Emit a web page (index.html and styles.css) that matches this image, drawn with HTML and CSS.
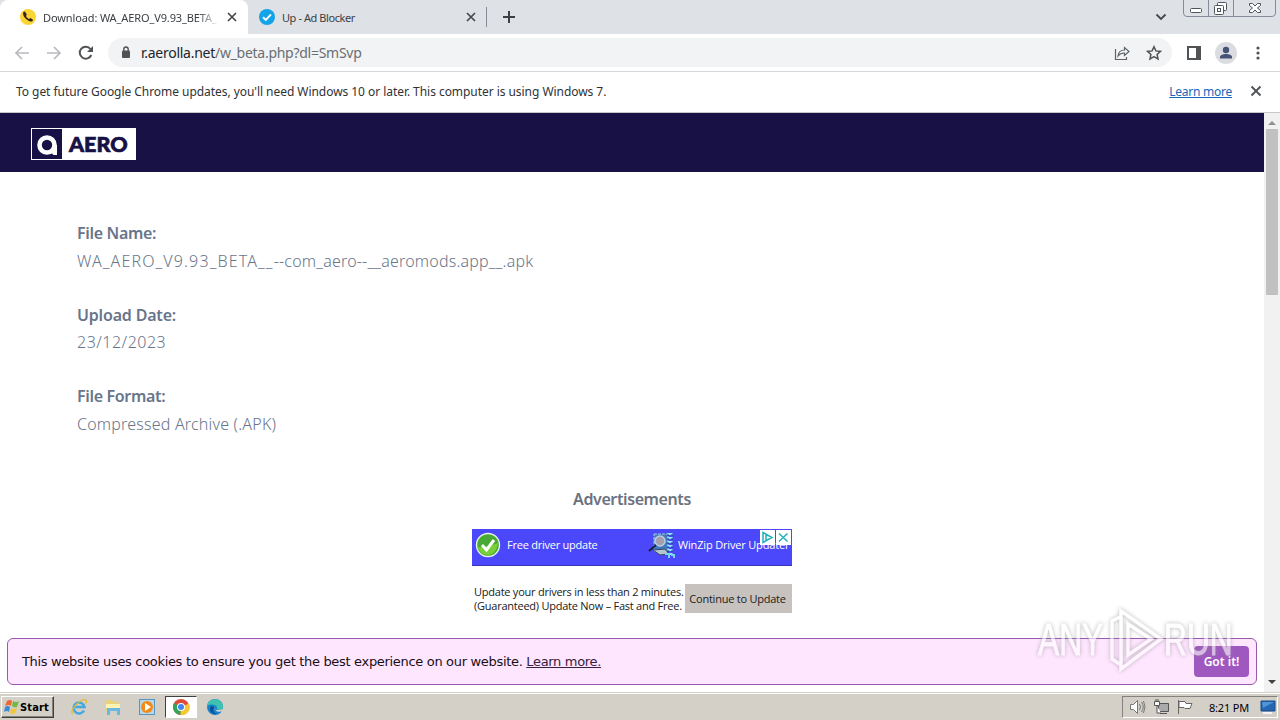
FILE: index.html
```
<!DOCTYPE html>
<html lang="en">
<head>
    <meta charset="UTF-8">
    <meta name="viewport" content="width=device-width, initial-scale=1.0">
    <title>Download: WA_AERO_V9.93_BETA</title>
    <link rel="stylesheet" href="styles.css">
</head>
<body>

    <!-- Tab strip -->
    <div class="tabs">
        <div class="tab active">
            <svg class="favicon" width="16" height="16" viewBox="0 0 16 16"><circle cx="8" cy="8" r="8" fill="#fcd535"/><path d="M3.500 3c-1 1-.4 4 1.800 6.200s5.300 4.300 7.200 2.800l.6-1-2.500-2-1.700.9c-1.200-.5-2.300-1.700-2.900-3l.8-1.500L5 2.500z" fill="#33271d"/></svg>
            <span class="tab-title fade">Download: WA_AERO_V9.93_BETA_</span>
            <svg class="tab-close" width="10" height="10" viewBox="0 0 10 10"><path d="M1 1l8 8M9 1L1 9" stroke="#45484c" stroke-width="1.700"/></svg>
        </div>
        <div class="tab">
            <svg class="favicon" width="16" height="16" viewBox="0 0 16 16"><circle cx="8" cy="8" r="8" fill="#13a3e8"/><path d="M4 8.200l2.800 2.600L12 5.300" fill="none" stroke="#fff" stroke-width="1.900"/></svg>
            <span class="tab-title second">Up - Ad Blocker</span>
            <svg class="tab-close" width="10" height="10" viewBox="0 0 10 10"><path d="M1 1l8 8M9 1L1 9" stroke="#45484c" stroke-width="1.700"/></svg>
        </div>
        <span class="divider"></span>
        <svg class="new-tab" width="12" height="12" viewBox="0 0 12 12"><path d="M6 0v12M0 6h12" stroke="#3c4043" stroke-width="2"/></svg>
        <svg class="tab-search" width="12" height="8" viewBox="0 0 12 8"><path d="M1.500 1.500L6 6l4.500-4.500" fill="none" stroke="#45484c" stroke-width="1.800"/></svg>
        <svg class="window-buttons" width="94" height="18" viewBox="0 0 94 18">
            <path d="M.5 0v13q0 3.500 3.500 3.500h85q3.500 0 3.500-3.500V0M25.500 0v16M50.500 0v16" fill="none" stroke="#858b98"/>
            <g fill="#fff" stroke="#50545d"><rect x="7.500" y="8.500" width="11" height="4" rx="1"/><rect x="34.500" y="2.500" width="9" height="8" rx="1"/><rect x="31.500" y="5.500" width="9" height="9" rx="1"/><rect x="34.500" y="8.500" width="3" height="3"/></g>
            <path d="M66.500 3.500h3l2.500 2.500 2.500-2.500h3v2l-3 2.500 3 2.500v2h-3L72 10l-2.500 2.500h-3v-2l3-2.500-3-2.500z" fill="#fff" stroke="#50545d"/>
        </svg>
    </div>

    <!-- Toolbar -->
    <div class="toolbar">
        <svg class="nav-icon" width="16" height="16" viewBox="0 0 16 16"><path d="M15 8H2M8 2L2 8l6 6" fill="none" stroke="#b8babd" stroke-width="1.700"/></svg>
        <svg class="nav-icon" width="16" height="16" viewBox="0 0 16 16"><path d="M1 8h13M8 2l6 6-6 6" fill="none" stroke="#b8babd" stroke-width="1.700"/></svg>
        <svg class="nav-icon" width="16" height="16" viewBox="0 0 16 16"><path d="M13.300 10A6 6 0 1 1 12.500 4" fill="none" stroke="#505356" stroke-width="2"/><path d="M15 1v6H9z" fill="#505356"/></svg>
        <div class="omnibox">
            <svg width="10" height="13" viewBox="0 0 10 13"><rect x="1" y="4.500" width="8" height="7.500" rx="1" fill="#505356"/><path d="M2.800 5V3.200a2.200 2.200 0 0 1 4.400 0V5" fill="none" stroke="#505356" stroke-width="1.400"/></svg>
            <span class="url"><span class="host">r.aerolla.net</span>/w_beta.php?dl=SmSvp</span>
            <svg class="share" width="16" height="16" viewBox="0 0 16 16"><path d="M1.500 4v10.500h11V12M4 11c.5-4 3-6 6.500-6V2.500L15 6.500l-4.500 4V8C7.500 8 5.500 9 4 11z" fill="none" stroke="#5f6368" stroke-width="1.200"/></svg>
            <svg width="16" height="16" viewBox="0 0 16 16"><path d="M8 1.700l1.900 4.200 4.600.5-3.400 3.100.9 4.600-4-2.400-4 2.400.9-4.600L1.500 6.400l4.600-.5z" fill="none" stroke="#505356" stroke-width="1.500"/></svg>
        </div>
        <svg class="panel-icon" width="14" height="14" viewBox="0 0 14 14"><rect x="1" y="1" width="12" height="12" fill="none" stroke="#505356" stroke-width="2"/><path d="M9 1h4v12H9z" fill="#505356"/></svg>
        <svg class="avatar" width="22" height="22" viewBox="0 0 22 22"><circle cx="11" cy="11" r="11" fill="#dadce0"/><circle cx="11" cy="8" r="3.200" fill="#465377"/><path d="M5 16.500v-1.500c0-4 12-4 12 0v1.500z" fill="#465377"/></svg>
        <svg class="menu" width="4" height="14" viewBox="0 0 4 14"><g fill="#505356"><circle cx="2" cy="2" r="1.600"/><circle cx="2" cy="7" r="1.600"/><circle cx="2" cy="12" r="1.600"/></g></svg>
    </div>

    <div class="infobar">
        <span class="infobar-text">To get future Google Chrome updates, you'll need Windows 10 or later. This computer is using Windows 7.</span>
        <a class="infobar-link">Learn more</a>
        <svg width="12" height="12" viewBox="0 0 12 12"><path d="M1.500 1.500l9 9M10.500 1.500l-9 9" stroke="#505356" stroke-width="1.900"/></svg>
    </div>

    <div class="viewport">
        <div class="page">
            <header class="site-header">
                <div class="logo">
                    <svg class="logo-mark" width="30" height="30" viewBox="0 0 30 30"><circle cx="15" cy="16" r="7.500" fill="none" stroke="#fff" stroke-width="4.600"/><path d="M20.500 16h4.500v10h-3.500l-2-2z" fill="#fff"/></svg>
                    <span class="logo-name">AERO</span>
                </div>
            </header>

            <main class="content">
                <dl class="details">
                    <dt>File Name:</dt>
                    <dd class="file"><span class="file-version">WA_AERO_V9.93_BETA__</span>--com_aero--__aeromods.app__.apk</dd>
                    <dt class="upload">Upload Date:</dt>
                    <dd class="date">23/12/2023</dd>
                    <dt>File Format:</dt>
                    <dd class="archive">Compressed Archive (.APK)</dd>
                </dl>

                <h2 class="ads-title">Advertisements</h2>
                <div class="ad">
                    <div class="ad-banner">
                        <svg class="ad-check" width="26" height="26" viewBox="0 0 26 26"><circle cx="13" cy="13" r="11.500" fill="#49a935" stroke="#e8f4e5" stroke-width="1.400"/><path d="M3 15c5 1 13-2 20-4-1 8-5 12-10 12S4 20 3 15z" fill="#78cf36"/><path d="M7 13l4.500 5L19 8" fill="none" stroke="#fff" stroke-width="3"/></svg>
                        <span class="ad-free">Free driver update</span>
                        <svg class="ad-zip" width="28" height="28" viewBox="0 0 28 28">
                            <path d="M6 2h14v17H6z" fill="#4378bd" stroke="#a5cfe5" stroke-dasharray="3 1"/>
                            <path d="M5 18l12-1 4 5-9 1z" fill="#b4c5ce" stroke="#304569"/>
                            <path d="M22 1v22" stroke="#8be5f2" stroke-width="5" stroke-dasharray="2 2"/>
                            <path d="M20 2v22M24 2v22" stroke="#16467c" stroke-dasharray="2 2"/>
                            <path d="M17 22h4v4M23 23h3v3" fill="none" stroke="#72d9e9" stroke-width="2"/>
                            <circle cx="12" cy="9" r="5" fill="#a49fae" stroke="#b9cee0" stroke-width="1.500"/>
                            <path d="M8 13l-7 6" stroke="#17203a" stroke-width="2"/>
                        </svg>
                        <span class="ad-product">WinZip Driver Updater</span>
                        <svg class="ad-choices" width="32" height="15" viewBox="0 0 32 15"><path d="M0 0h15v15H0zM16 0h15v15H16z" fill="#fff"/><path d="M3 2.500v10l9-5zM6 5v5M19 3.500l8.500 8M27.500 3.500l-8.500 8" fill="none" stroke="#22aebd" stroke-width="1.500"/></svg>
                    </div>
                    <div class="ad-body">
                        <div class="ad-copy"><span>Update your drivers in less than 2 minutes.</span><span>(Guaranteed) Update Now – Fast and Free.</span></div>
                        <a class="ad-button">Continue to Update</a>
                    </div>
                </div>
            </main>
        </div>
        <div class="scrollbar">
            <svg width="8" height="5" viewBox="0 0 8 5"><path d="M0 5l4-4 4 4z" fill="#909090"/></svg>
            <span class="thumb"></span>
            <svg class="down" width="8" height="5" viewBox="0 0 8 5"><path d="M0 0l4 4 4-4z" fill="#404040"/></svg>
        </div>

        <div class="cookies">
            <span class="cookie-text">This website uses cookies to ensure you get the best experience on our website. <a>Learn more.</a></span>
            <button class="got-it">Got it!</button>
        </div>
        <div class="watermark">
            <span class="any">ANY</span>
            <svg width="58" height="64" viewBox="0 0 58 64"><path d="M15 3l40 28-40 30V3zM22 16v31l23-16zM14 9L6 13v38l9 6" fill="none" stroke="#fff" stroke-width="3.500"/></svg>
            <span class="run">RUN</span>
        </div>
    </div>

    <!-- Windows taskbar -->
    <div class="taskbar">
        <div class="start">
            <svg width="16" height="16" viewBox="0 0 16 16"><path d="M3 2q3-2 5 0L7 7Q5 5 1 7z" fill="#ed672f"/><path d="M9 2q3 2 6 0l-2 6q-3 1-5-1z" fill="#70b847"/><path d="M1 8q3-2 5 0l-1 5q-2-2-5 0z" fill="#398bd5"/><path d="M7 9q3 2 6 0l-2 5q-3 2-5 0z" fill="#f2c63b"/></svg>
            <span class="start-label">Start</span>
        </div>
        <div class="launch">
            <svg width="18" height="18" viewBox="0 0 18 18"><path d="M14 12.500a5.500 5.500 0 1 1 .5-3.500H5" fill="none" stroke="#45a9e0" stroke-width="2.600"/><path d="M3 16C-2 13 11 0 16 2c1 1 0 3-1 4" fill="none" stroke="#e5b936" stroke-width="1.300"/></svg>
            <svg width="18" height="18" viewBox="0 0 18 18"><path d="M1 3l2-1h5l2 2h6v9H1z" fill="#ead17b"/><path d="M2 6h14v4H2z" fill="#fff2b3"/><path d="M3 17v-7h13v7h-3v-4H6v4z" fill="#69b9df"/></svg>
            <svg width="18" height="18" viewBox="0 0 18 18"><rect x="1.500" y="1.500" width="15" height="15" fill="#b7d7eb" stroke="#5995c0"/><circle cx="9" cy="9" r="6" fill="#f18b16"/><path d="M7 5l6 4-6 4z" fill="#fff"/></svg>
            <div class="running">
                <svg width="18" height="18" viewBox="0 0 18 18"><circle cx="9" cy="9" r="8" fill="#df4939"/><path d="M9 9L2 5.200A8 8 0 0 0 8.500 17z" fill="#33a557"/><path d="M9 9l8-3.500A8 8 0 0 1 8.500 17z" fill="#f8c833"/><circle cx="9" cy="9" r="4" fill="#fff"/><circle cx="9" cy="9" r="3" fill="#4385ed"/></svg>
            </div>
            <svg width="18" height="18" viewBox="0 0 18 18"><circle cx="9" cy="9" r="8" fill="#1583cc"/><path d="M1 8c1-9 16-9 16 1 0 3-4 4-6 2 1-4-5-6-10-3z" fill="#3fc3b0"/><path d="M5 8c-3 4 1 9 6 8-4-1-5-5-2-7z" fill="#075297"/><path d="M9 8c-2 4 3 5 8 3v2c-5 2-9 0-8-5z" fill="#d5d1c9"/></svg>
        </div>
        <div class="tray">
            <svg width="17" height="16" viewBox="0 0 17 16"><path d="M1.500 5.500h3l4-4v13l-4-4h-3z" fill="#fff" stroke="#777"/><path d="M10.500 5q2 3 0 6M12.500 3q3.500 5 0 10M14.500 2q3 6 0 12" fill="none" stroke="#777"/></svg>
            <svg width="17" height="16" viewBox="0 0 17 16"><path d="M5.500 4.500h10v8h-10zM7 14.500h7" fill="#aaa" stroke="#555"/><path d="M1.500 2.500h5v4h-5zM3 0v3M5 0v3M4 7v7h4" fill="#fff" stroke="#555"/></svg>
            <svg width="17" height="16" viewBox="0 0 17 16"><path d="M1.500 1v14M2 2.500h6l1 2h6l-2 5H8l-1-1H2z" fill="#fff" stroke="#666"/></svg>
            <span class="clock">8:21 PM</span>
            <svg class="desktop" width="16" height="14" viewBox="0 0 16 14"><path d="M1 1h14v10H1z" fill="#2465b4" stroke="#164c89"/><path d="M2 2h12L3 8z" fill="#4f94d8"/><path d="M3 13h9" stroke="#f4f4f4" stroke-width="2"/></svg>
        </div>
    </div>

</body>
</html>
```
FILE: styles.css
```
* { box-sizing: border-box; }
body { margin: 0; width: 1280px; height: 720px; overflow: hidden; background: #fff; font-family: "Noto Sans", sans-serif; }
svg { display: block; flex: none; }
span, a, dt, dd { white-space: nowrap; }

.tabs { display: flex; align-items: center; height: 34px; background: #dee1e6; }
.tab { display: flex; align-items: center; height: 34px; width: 239px; padding-left: 11px; }
.tab.active { width: 248px; padding-left: 20px; background: #fff; border-radius: 8px 8px 0 0; }
.tab-title { width: 176px; margin-left: 7px; color: #3c4043; font-size: 11px; letter-spacing: -0.12px; }
.tab-title.second { width: 176px; letter-spacing: -0.42px; }
.fade { -webkit-mask-image: linear-gradient(90deg, #000 155px, transparent); }
.tab-close { margin-left: 8px; }
.divider { width: 1px; height: 20px; margin-left: -1px; background: #888b91; }
.new-tab { margin-left: 16px; }
.tab-search { margin-left: 640px; }
.window-buttons { align-self: flex-start; margin-left: 16px; }

.toolbar { display: flex; align-items: center; height: 38px; padding-left: 14px; border-bottom: 1px solid #d7d8da; }
.nav-icon { margin-right: 16px; }
.omnibox { display: flex; align-items: center; width: 1064px; height: 29px; margin-left: -2px; padding-left: 13px; border-radius: 15px; background: #f1f3f4; }
.url { margin-left: 10px; color: #6a6e73; font-size: 14px; letter-spacing: -0.27px; }
.host { color: #222529; }
.share { margin-left: auto; margin-right: 16px; }
.omnibox svg:last-child { margin-right: 10px; }
.panel-icon { margin-left: 15px; }
.avatar { margin-left: 14px; }
.menu { margin-left: 19px; }

.infobar { display: flex; align-items: center; height: 41px; padding: 0 18px 2px 16px; border-bottom: 1px solid #c8c8ca; color: #303236; font-size: 12px; }
.infobar-text { letter-spacing: -0.05px; }
.infobar-link { margin-left: auto; margin-right: 18px; color: #1967b8; letter-spacing: -0.25px; text-decoration: underline; }

.viewport { position: relative; display: flex; height: 579px; }
.page { width: 1264px; }
.site-header { display: flex; height: 59px; padding: 15px 31px; background: #171145; }
.logo { display: flex; align-items: center; width: 105px; height: 32px; padding: 1px; background: #fff; }
.logo-mark { background: #171145; }
.logo-name { margin-left: 7px; color: #171145; font: 900 21.500px/30px Lato, sans-serif; -webkit-text-stroke: 0.7px #171145; }

.details { margin: 0; padding: 48px 77px 0; font-size: 16px; line-height: 27px; }
.details dt { height: 27.500px; color: #68758a; font-weight: 600; letter-spacing: -0.33px; }
.details .upload { letter-spacing: -0.18px; }
.details dd { height: 27px; margin: 0 0 27px; color: #68758a; font-weight: 300; }
.details .file { letter-spacing: 0.19px; }
.file-version { letter-spacing: 1.13px; }
.details .date { letter-spacing: 0.5px; }
.details .archive { letter-spacing: 0.2px; }
.ads-title { margin: 48px 0 16px; text-align: center; color: #6b7280; font-size: 16px; font-weight: 600; line-height: 27px; letter-spacing: -0.4px; }

.ad { width: 320px; margin: 0 auto; font-family: "Open Sans", sans-serif; font-size: 11px; letter-spacing: -0.24px; }
.ad-banner { position: relative; display: flex; height: 37px; padding: 3px 0 0 3px; background: #4a48fa; border-bottom: 1px solid #3836bb; color: #fff; line-height: 26px; }
.ad-free { width: 137px; margin-left: 6px; }
.ad-zip { margin-left: 4px; }
.ad-product { margin-left: 2px; letter-spacing: -0.17px; }
.ad-choices { position: absolute; top: 1px; right: 0; }
.ad-body { display: flex; height: 30px; margin-top: 18px; color: #202020; }
.ad-copy { display: flex; flex-direction: column; width: 213px; padding: 1px 2px; line-height: 14px; }
.ad-button { width: 107px; height: 29px; padding-right: 2px; background: #c8c2bf; text-align: center; line-height: 29px; }

.scrollbar { display: flex; flex-direction: column; align-items: center; width: 16px; padding: 7px 0; background: #f1f1f1; }
.thumb { width: 12px; height: 166px; margin-top: 4px; background: #c1c1c1; }
.down { margin-top: auto; }

.cookies { position: absolute; left: 7px; top: 525px; display: flex; align-items: center; width: 1250px; height: 47px; padding: 0 7px 0 14px; border: 1px solid #9859ad; border-radius: 6px; background: #ffe6ff; color: #171017; font: 13px "DejaVu Sans", sans-serif; letter-spacing: -0.32px; }
.cookies a { color: #38203e; text-decoration: underline; }
.got-it { width: 55px; height: 31px; margin-left: auto; padding: 0; border: 0; border-radius: 4px; background: #9f58c0; color: #fff; font: 600 12px "Noto Sans", sans-serif; }
.watermark { position: absolute; left: 1038px; top: 495px; display: flex; align-items: center; height: 64px; opacity: .6; color: #fff; font: 44px "Liberation Sans", sans-serif; -webkit-text-stroke: 1px #fff; filter: drop-shadow(0 0 2px #8f8891); }
.any, .run { transform: scaleX(.72); transform-origin: left; width: 68px; }

.taskbar { display: flex; align-items: center; height: 28px; padding: 1px 2px 0 1px; border-top: 1px solid #d4d0c8; background: #d4d0c8; box-shadow: inset 0 1px #fff; }
.start { display: flex; align-items: center; width: 53px; height: 22px; padding-left: 2px; border: 1px solid; border-color: #fff #404040 #404040 #fff; box-shadow: inset -1px -1px #85827d; }
.start-label { color: #000; font: bold 11px "DejaVu Sans Condensed", sans-serif; letter-spacing: 0.15px; }
.launch { display: flex; align-items: center; margin-left: 16px; gap: 16px; }
.running { display: flex; align-items: center; justify-content: center; width: 32px; height: 22px; margin: 0 -7px; border: 1px solid; border-color: #404040 #fff #fff #404040; background: #fff; }
.tray { display: flex; align-items: center; width: 156px; height: 22px; margin-left: auto; padding-left: 6px; border: 1px solid; border-color: #85827d #fff #fff #85827d; }
.tray svg { margin-right: 7px; }
.clock { width: 41px; margin-left: 8px; color: #000; font-size: 11px; letter-spacing: -0.2px; }
.tray .desktop { margin: 0 0 0 10px; }
```
